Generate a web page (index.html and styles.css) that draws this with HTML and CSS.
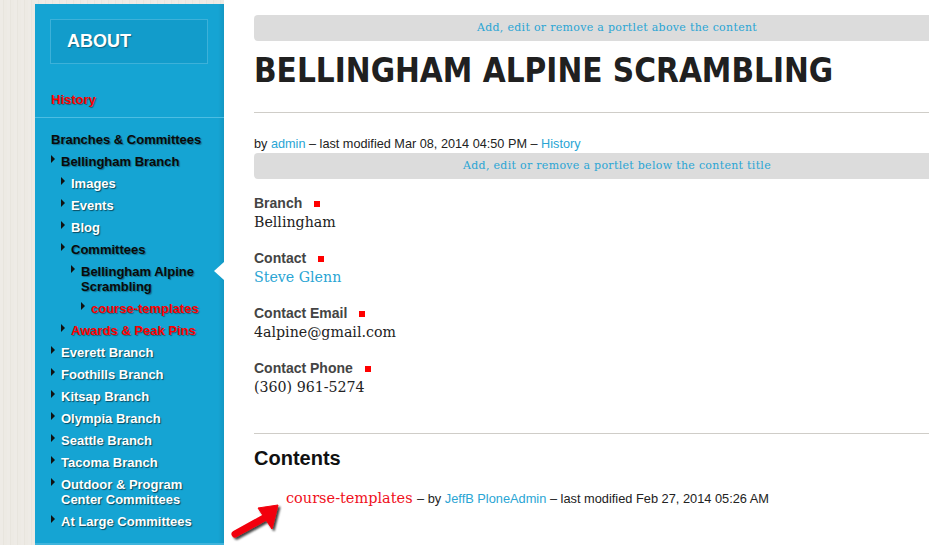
FILE: index.html
```html
<!DOCTYPE html>
<html lang="en">
<head>
<meta charset="UTF-8" />
<title>Bellingham Alpine Scrambling</title>
<link rel="stylesheet" href="styles.css">
</head>
<body>
<div class="page">
  <div class="gutter"></div>

  <!-- left navigation -->
  <nav class="sidebar">
    <div class="about">ABOUT</div>
    <div class="history"><a class="red" href="#">History</a></div>
    <ul class="nav">
      <li class="head"><a class="dark" href="#">Branches &amp; Committees</a>
        <ul>
          <li><a class="dark" href="#">Bellingham Branch</a>
            <ul>
              <li><a href="#">Images</a></li>
              <li><a href="#">Events</a></li>
              <li><a href="#">Blog</a></li>
              <li><a class="dark" href="#">Committees</a>
                <ul>
                  <li><a class="dark" href="#">Bellingham Alpine Scrambling</a>
                    <ul>
                      <li><a class="red" href="#">course-templates</a></li>
                    </ul>
                  </li>
                </ul>
              </li>
              <li><a class="red" href="#">Awards &amp; Peak Pins</a></li>
            </ul>
          </li>
          <li><a href="#">Everett Branch</a></li>
          <li><a href="#">Foothills Branch</a></li>
          <li><a href="#">Kitsap Branch</a></li>
          <li><a href="#">Olympia Branch</a></li>
          <li><a href="#">Seattle Branch</a></li>
          <li><a href="#">Tacoma Branch</a></li>
          <li><a href="#">Outdoor &amp; Program Center Committees</a></li>
          <li><a href="#">At Large Committees</a></li>
        </ul>
      </li>
    </ul>
    <div class="notch"></div>
  </nav>

  <!-- main content -->
  <main class="main">
    <div class="portlet-bar"><a href="#">Add, edit or remove a portlet above the content</a></div>
    <h1 class="title">BELLINGHAM ALPINE SCRAMBLING</h1>
    <div class="byline">by <a href="#">admin</a> – last modified Mar 08, 2014 04:50 PM – <a href="#">History</a></div>
    <div class="portlet-bar"><a href="#">Add, edit or remove a portlet below the content title</a></div>

    <div class="field">
      <div class="label">Branch <span class="req"></span></div>
      <div class="value">Bellingham</div>
    </div>
    <div class="field">
      <div class="label">Contact <span class="req"></span></div>
      <div class="value"><a href="#">Steve Glenn</a></div>
    </div>
    <div class="field">
      <div class="label">Contact Email <span class="req"></span></div>
      <div class="value">4alpine@gmail.com</div>
    </div>
    <div class="field">
      <div class="label">Contact Phone <span class="req"></span></div>
      <div class="value">(360) 961-5274</div>
    </div>

    <div class="contents">
      <h2>Contents</h2>
      <div class="item">
        <a class="item-link" href="#">course-templates</a>
        <span class="item-meta">– by <a href="#">JeffB PloneAdmin</a> – last modified Feb 27, 2014 05:26 AM</span>
      </div>
    </div>
  </main>

  <!-- pointer arrow -->
  <svg class="arrow" width="56" height="42" viewBox="0 0 56 42">
    <defs>
      <filter id="shade" x="-20%" y="-20%" width="150%" height="150%">
        <feDropShadow dx="2" dy="2" stdDeviation="1.2" flood-color="#000" flood-opacity="0.75" />
      </filter>
    </defs>
    <g filter="url(#shade)" fill="#f2000a" stroke="#f2000a">
      <line x1="7" y1="31" x2="36" y2="15" stroke-width="7" stroke-linecap="round" />
      <polygon points="30,5 50,2 44,26" stroke-width="1" stroke-linejoin="round" />
    </g>
  </svg>
</div>
</body>
</html>
```

FILE: styles.css
```css
/* base */
html, body {
  margin: 0;
  padding: 0;
  overflow: hidden;
}
body {
  background: #ece9e3;
  background-image: repeating-linear-gradient(90deg, #eeebe6 0 3px, #e8e5de 3px 4px, #edeae4 4px 7px);
  font-family: "Liberation Sans", Arial, sans-serif;
  color: #333;
}
a {
  text-decoration: none;
}

.page {
  position: relative;
  display: flex;
  align-items: stretch;
  min-height: 545px;
  width: 1010px;
}
.gutter {
  width: 35px;
  flex: none;
}

/* sidebar */
.sidebar {
  position: relative;
  flex: none;
  width: 189px;
  margin-top: 4px;
  padding: 15px 16px 0 15px;
  box-sizing: border-box;
  background: #15a4d3;
  background-image: linear-gradient(90deg, rgba(0,0,0,0) 0, rgba(0,0,0,0) 183px, rgba(0,0,0,0.08) 189px);
  font-size: 13px;
  font-weight: bold;
  line-height: 15px;
  border-bottom: 2px solid #3fb4dc;
}
.about {
  width: 158px;
  height: 45px;
  box-sizing: border-box;
  border: 1px solid #3db1d9;
  background: #129ccb;
  color: #fff;
  font-size: 18px;
  line-height: 43px;
  padding-left: 16px;
  text-shadow: 1px 1px 1px rgba(0, 0, 0, 0.35);
}
.history {
  margin: 28px -16px 0 -15px;
  padding: 0 0 10px 16px;
  border-bottom: 1px solid #4dbde2;
}
.sidebar a {
  color: #fff;
  text-shadow: 1px 1px 1px rgba(0, 0, 0, 0.55);
}
.sidebar a.dark {
  color: #0a0a0a;
  text-shadow: 1px 1px 1px rgba(0, 0, 0, 0.35);
}
.sidebar a.red {
  color: #ff0000;
  text-shadow: 1px 1px 1px rgba(0, 0, 0, 0.4);
}

.nav, .nav ul {
  list-style: none;
  margin: 0;
  padding: 0;
}
.nav {
  margin-top: 14px;
  padding-left: 1px;
}
.nav li {
  margin-top: 7px;
}
.nav li.head {
  margin-top: 0;
}
.nav ul li {
  position: relative;
  padding-left: 10px;
}
.nav ul li::before {
  content: "";
  position: absolute;
  left: 0;
  top: 1px;
  border-left: 4px solid #111;
  border-top: 4px solid transparent;
  border-bottom: 4px solid transparent;
}
.nav ul li > a {
  display: block;
}

.notch {
  position: absolute;
  right: 0;
  top: 258px;
  border-right: 10px solid #fff;
  border-top: 9px solid transparent;
  border-bottom: 9px solid transparent;
}

/* main column */
.main {
  flex: none;
  width: 726px;
  background: #fff;
  padding: 15px 0 0 30px;
}
.portlet-bar {
  height: 26px;
  line-height: 26px;
  background: #dcdcdc;
  border-radius: 4px 0 0 4px;
  text-align: center;
  font-family: "DejaVu Serif", serif;
  font-size: 11px;
  letter-spacing: 0.3px;
}
.portlet-bar a {
  color: #2aa5d4;
}
.title {
  margin: 10px -60px 0 0;
  font-family: "DejaVu Sans", sans-serif;
  font-stretch: condensed;
  font-size: 33px;
  line-height: 40px;
  font-weight: 900;
  color: #202020;
  padding-bottom: 21px;
  border-bottom: 1px solid #cfcdc8;
}
.byline {
  margin: 23px 0 1px;
  font-size: 12.7px;
  line-height: 16px;
  color: #222;
}
.byline a, .item-meta a, .value a {
  color: #2aa5d4;
}

.field {
  margin-top: 15px;
}
.field + .field {
  margin-top: 17px;
}
.label {
  font-size: 14px;
  font-weight: bold;
  line-height: 18px;
  color: #444;
}
.req {
  display: inline-block;
  width: 6px;
  height: 6px;
  margin-left: 8px;
  background: #f00;
  vertical-align: 1px;
}
.value {
  font-family: "DejaVu Serif", serif;
  font-size: 14.2px;
  line-height: 20px;
  color: #222;
}

.contents {
  margin-top: 36px;
  border-top: 1px solid #cfcdc8;
}
.contents h2 {
  margin: 12px 0 0;
  font-size: 20px;
  line-height: 24px;
  color: #111;
}
.item {
  margin-top: 19px;
  padding-left: 32px;
  line-height: 18px;
}
.item-link {
  color: #f0101c;
  font-family: "DejaVu Serif", serif;
  font-size: 14.5px;
}
.item-meta {
  font-size: 12.8px;
  color: #222;
}

/* arrow over the page */
.arrow {
  position: absolute;
  left: 228px;
  top: 503px;
}
```
